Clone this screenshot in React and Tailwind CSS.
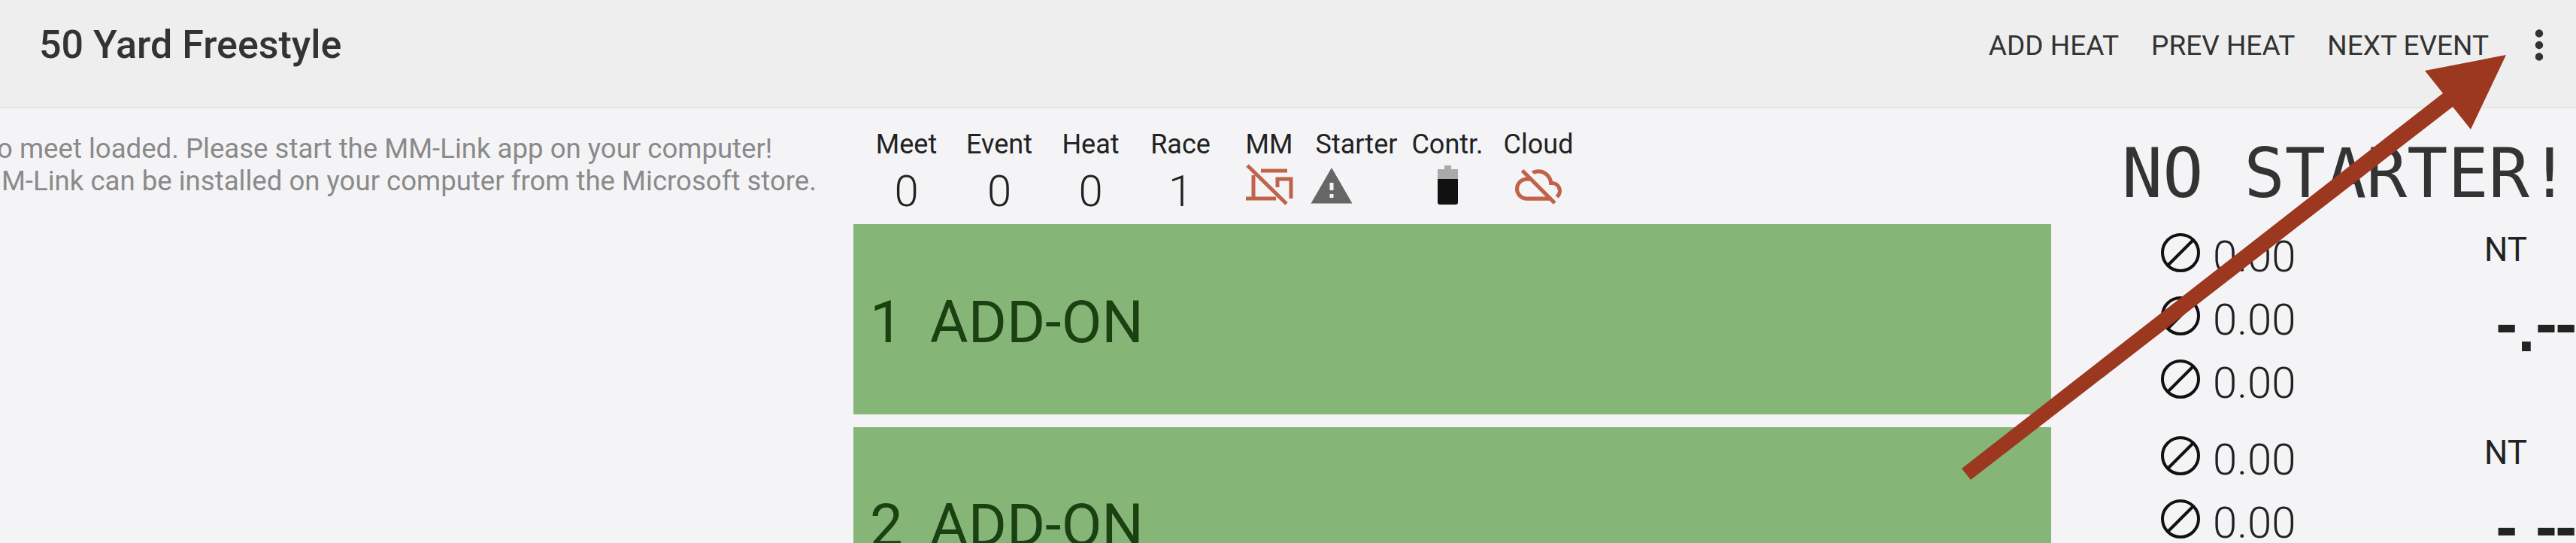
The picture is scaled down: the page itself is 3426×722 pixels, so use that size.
import React from 'react';
import { MdMoreVert, MdOutlineCloudOff, MdWarning } from 'react-icons/md';

const stats = [
  { label: 'Meet', value: '0', w: 'w-[123px]' },
  { label: 'Event', value: '0', w: 'w-[124px]' },
  { label: 'Heat', value: '0', w: 'w-[119px]' },
  { label: 'Race', value: '1', w: 'w-[120px]' },
];

const lanes = [
  { id: 1, name: 'ADD-ON' },
  { id: 2, name: 'ADD-ON' },
];

function DesktopOff() {
  return (
    <svg width="66" height="56" viewBox="0 0 66 56" fill="none" stroke="#c1634a" strokeWidth="5" className="mt-[6px]">
      <path d="M4 2 L56 53" />
      <path d="M22 9 H57" />
      <path d="M44 31 V20 H62 V46" />
      <path d="M12 15 V46" />
      <path d="M2 46 H42" />
    </svg>
  );
}

function Battery() {
  return (
    <svg width="27" height="52" viewBox="0 0 27 52" className="mt-[8px]">
      <path d="M9 0 H18 V5 H27 V18 H0 V5 H9 Z" fill="#a9a9a9" />
      <path d="M0 18 H27 V49 Q27 52 24 52 H3 Q0 52 0 49 Z" fill="#111111" />
    </svg>
  );
}

function NoEntry() {
  return (
    <svg width="54" height="54" viewBox="0 0 54 54" fill="none" stroke="#111111" strokeWidth="4" className="-mt-[10px]">
      <circle cx="27" cy="27" r="24" />
      <path d="M44 10 L10 44" />
    </svg>
  );
}

function TimeRow() {
  return (
    <div className="flex items-center h-[84px] pt-[2px] text-[58px] font-light text-[#222] leading-none">
      <NoEntry />
      <span className="ml-[16px]">0.00</span>
    </div>
  );
}

export default function App() {
  return (
    <div className="relative w-[3426px] h-[722px] overflow-hidden bg-[#f4f4f6] font-['Roboto',sans-serif]">
      {/* Toolbar */}
      <header className="flex items-center justify-between h-[144px] pl-[52px] pr-[18px] bg-[#eeeeee] border-b-2 border-[#e4e4e4] text-[#333]">
        <h1 className="text-[52px] font-medium leading-none -mt-[22px]">50 Yard Freestyle</h1>
        <div className="flex items-center -mt-[22px]">
          <span className="text-[37px] font-normal leading-none">ADD HEAT</span>
          <span className="ml-[43px] text-[37px] font-normal leading-none">PREV HEAT</span>
          <span className="ml-[43px] text-[37px] font-normal leading-none">NEXT EVENT</span>
          <MdMoreVert size={62} className="ml-[36px] text-[#333]" />
        </div>
      </header>

      <div className="flex">
        {/* Status message */}
        <div className="w-[1135px] shrink-0 overflow-hidden pt-[32px]">
          <p className="-ml-[30px] w-[1200px] text-[36.6px] leading-[43px] text-[#8a8a8a]">
            No meet loaded. Please start the MM-Link app on your computer!
            <br />
            MM-Link can be installed on your computer from the Microsoft store.
          </p>
        </div>

        <div className="flex-1 min-w-0">
          <div className="flex h-[154px]">
            <div className="flex w-[1593px] shrink-0 pl-[9px] pt-[28px]">
              {stats.map((s) => (
                <div key={s.label} className={`${s.w} flex flex-col items-center text-[#222]`}>
                  <span className="text-[36px] leading-[40px]">{s.label}</span>
                  <span className="text-[58px] font-light leading-[68px] mt-[8px]">{s.value}</span>
                </div>
              ))}
              <div className="w-[116px] flex flex-col items-center text-[#222]">
                <span className="text-[36px] leading-[40px]">MM</span>
                <DesktopOff />
              </div>
              <div className="w-[116px] flex flex-col items-center text-[#222]">
                <span className="text-[36px] leading-[40px]">Starter</span>
                <MdWarning size={60} className="self-start -ml-[5px] text-[#666] mt-[6px]" />
              </div>
              <div className="ml-[4px] w-[118px] flex flex-col items-center text-[#222]">
                <span className="text-[36px] leading-[40px]">Contr.</span>
                <Battery />
              </div>
              <div className="w-[124px] flex flex-col items-center text-[#222]">
                <span className="text-[36px] leading-[40px]">Cloud</span>
                <MdOutlineCloudOff size={62} className="text-[#c1634a] mt-[3px]" />
              </div>
            </div>
            <div className="pl-[94px] pt-[37px] font-['DejaVu_Sans_Mono',monospace] text-[90px] leading-[100px] text-[#333] whitespace-nowrap">
              NO STARTER!
            </div>
          </div>

          {lanes.map((lane) => (
            <div key={lane.id} className="flex h-[253px] mb-[17px]">
              <div className="flex items-center w-[1593px] shrink-0 pl-[22px] pt-[8px] bg-[#86b677] text-[#1b4012] text-[78px] font-normal leading-none">
                <span>{lane.id}</span>
                <span className="ml-[36px]">{lane.name}</span>
              </div>
              <div className="relative flex-1 pl-[145px]">
                <TimeRow />
                <TimeRow />
                <TimeRow />
                <span className="absolute left-[576px] top-[12px] text-[44px] leading-none font-normal text-[#222]">NT</span>
                <span className="absolute left-[584px] top-[98px] font-['DejaVu_Sans_Mono',monospace] font-bold text-[72px] tracking-[-17px] leading-none text-[#222]">
                  -<span className="relative top-[10px]">.</span>--
                </span>
              </div>
            </div>
          ))}
        </div>
      </div>

      {/* Annotation arrow laid over the screenshot */}
      <svg className="absolute left-0 top-0 pointer-events-none" width="3426" height="722">
        <polygon points="3333,73 3225,94 3249,124 2609,623 2621,638 3262,142 3286,172" fill="#9c3720" />
      </svg>
    </div>
  );
}
